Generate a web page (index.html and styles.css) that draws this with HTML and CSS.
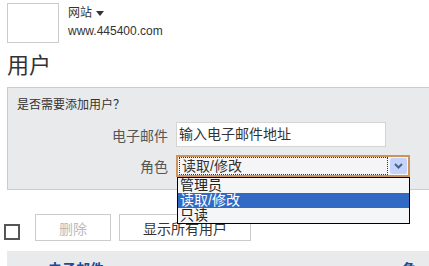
FILE: index.html
```html
<!DOCTYPE html>
<html lang="zh-CN">
<head>
  <meta charset="UTF-8" />
  <meta name="viewport" content="width=device-width, initial-scale=1.0" />
  <title>用户</title>
  <link rel="stylesheet" href="styles.css">
</head>
<body>

  <header class="site">
    <div class="avatar"></div>
    <div class="site-info">
      <div class="site-name">网站 <span class="caret"></span></div>
      <div class="site-url">www.445400.com</div>
    </div>
  </header>

  <h1>用户</h1>

  <!-- Add user panel -->
  <section class="panel">
    <p class="question">是否需要添加用户？</p>
    <div class="form-row">
      <label class="form-label">电子邮件</label>
      <div class="text-input">输入电子邮件地址</div>
    </div>
    <div class="form-row">
      <label class="form-label">角色</label>
      <div class="select">
        <div class="select-value"><span class="focus">读取/修改</span></div>
        <div class="select-arrow">
          <svg width="9" height="6" viewBox="0 0 9 6"><path d="M1 1 L4.5 4.5 L8 1" fill="none" stroke="#4d6185" stroke-width="2"/></svg>
        </div>
        <ul class="options">
          <li>管理员</li>
          <li class="selected">读取/修改</li>
          <li>只读</li>
        </ul>
      </div>
    </div>
  </section>

  <!-- Actions -->
  <div class="actions">
    <span class="check"></span>
    <button class="btn" disabled>删除</button>
    <button class="btn">显示所有用户</button>
  </div>

  <div class="table-head">
    <span class="col-email">电子邮件</span>
    <span class="col-role">角色</span>
  </div>

</body>
</html>
```

FILE: styles.css
```css
body {
  margin: 0;
  padding: 0;
  background: #ffffff;
  color: #333333;
  font-family: "Liberation Sans", "Noto Sans CJK SC", sans-serif;
  overflow: hidden;
}

/* Site header */
.site {
  display: flex;
  padding: 3px 7px 0;
}

.avatar {
  width: 50px;
  height: 38px;
  border: 1px solid #cccccc;
}

.site-info {
  margin-left: 9px;
  font-size: 12px;
  line-height: 16px;
  color: #333333;
}

.site-name {
  margin-top: 2px;
}

.caret {
  display: inline-block;
  width: 0;
  height: 0;
  border-left: 4px solid transparent;
  border-right: 4px solid transparent;
  border-top: 5px solid #333333;
  vertical-align: middle;
  margin-left: 1px;
}

.site-url {
  margin-top: 2px;
}

h1 {
  margin: 10px 0 0 7px;
  font-size: 22px;
  line-height: 26px;
  font-weight: normal;
  color: #333333;
}

/* Panel */
.panel {
  margin: 8px 0 0 7px;
  background: #e9eaeb;
  border: 1px solid #cccccc;
  border-right: none;
  padding: 9px 0 12px;
}

.question {
  margin: 0 0 0 9px;
  font-size: 12px;
  line-height: 16px;
}

.form-row {
  display: grid;
  grid-template-columns: 160px auto;
  column-gap: 8px;
  align-items: center;
}

.form-row + .form-row {
  margin-top: 8px;
}

.question + .form-row {
  margin-top: 9px;
}

.form-label {
  text-align: right;
  font-size: 14px;
  color: #555555;
}

.text-input {
  width: 204px;
  height: 23px;
  border: 1px solid #d4d4d4;
  background: #ffffff;
  padding: 0 2px 0 2px;
  font-size: 14px;
  line-height: 23px;
  color: #333333;
  box-sizing: content-box;
}

.select {
  position: relative;
  width: 230px;
  height: 18px;
  border: 2px solid #cf9357;
  background: #f5f5f7;
  display: flex;
  align-items: center;
}

.select-value {
  flex: 1;
  padding-left: 1px;
  font-size: 14px;
  line-height: 16px;
}

.focus {
  display: block;
  border: 1px dotted #333333;
  margin-right: 2px;
  padding-left: 2px;
}

.select-arrow {
  width: 17px;
  height: 16px;
  margin-right: 1px;
  background: #c4d3fb;
  border-radius: 2px;
  display: flex;
  align-items: center;
  justify-content: center;
}

/* Open dropdown list */
.options {
  position: absolute;
  top: 20px;
  left: -1px;
  width: 231px;
  margin: 0;
  padding: 0;
  list-style: none;
  background: #f5f6f8;
  border: 1px solid #000000;
  z-index: 2;
}

.options li {
  font-size: 14px;
  line-height: 15px;
  height: 15px;
  padding-left: 2px;
  color: #222222;
}

.options li.selected {
  background: #316ac5;
  color: #ffffff;
}

/* Actions */
.actions {
  display: flex;
  align-items: flex-start;
  margin-top: 24px;
  padding-left: 4px;
}

.check {
  width: 12px;
  height: 12px;
  border: 2px solid #555555;
  margin-top: 10px;
  margin-right: 15px;
}

.btn {
  height: 27px;
  background: #ffffff;
  border: 1px solid #cccccc;
  font-family: "Liberation Sans", "Noto Sans CJK SC", sans-serif;
  font-size: 14px;
  color: #333333;
  padding: 0 23px;
  margin-right: 8px;
}

.btn:disabled {
  color: #bbbbbb;
  width: 76px;
}

/* Table header */
.table-head {
  margin: 10px 0 0 7px;
  height: 20px;
  background: #e9eaeb;
  display: flex;
  justify-content: space-between;
  font-size: 14px;
  font-weight: bold;
  color: #1c4a96;
  line-height: 36px;
  overflow: hidden;
}

.col-email {
  margin-left: 41px;
}

.col-role {
  width: 27px;
}
```
